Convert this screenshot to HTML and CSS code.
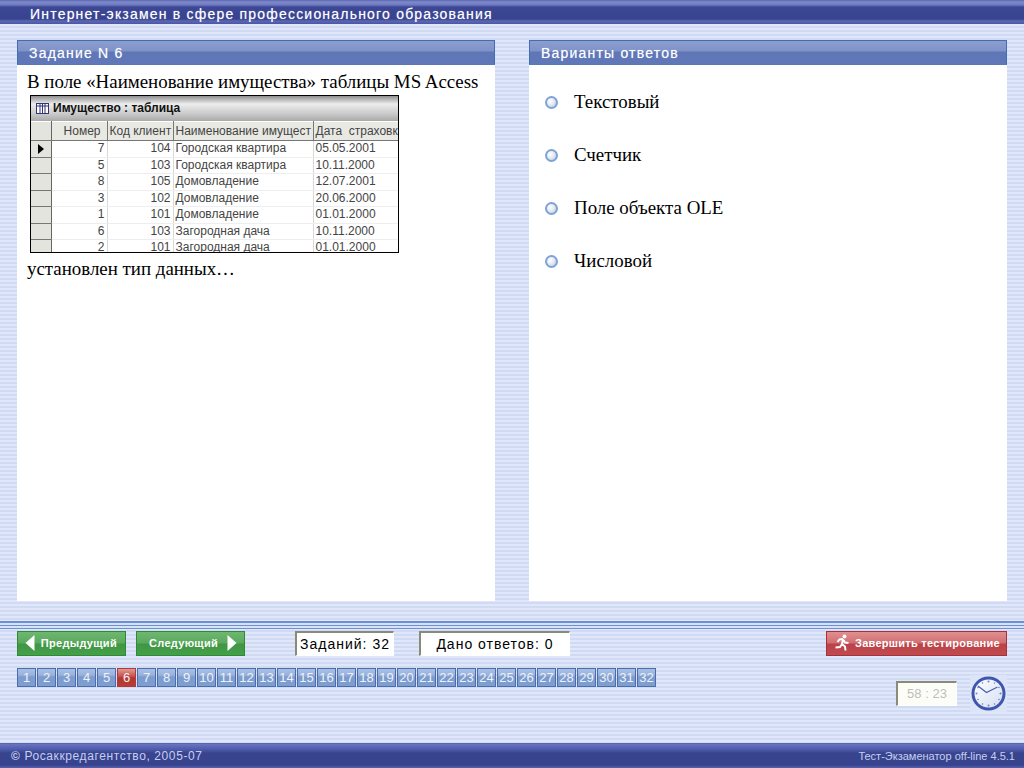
FILE: index.html
```html
<!DOCTYPE html>
<html lang="ru">

<head>
    <meta charset="UTF-8">
    <title>Интернет-экзамен</title>
    <link rel="stylesheet" href="styles.css">
</head>

<body>
    <div class="top-bar">Интернет-экзамен в сфере профессионального образования</div>

    <div class="main">
        <div class="panel">
            <div class="panel-head">Задание N 6</div>
            <div class="question">
                <div>В поле «Наименование имущества» таблицы MS Access</div>
                <div class="shot">
                    <div class="shot-title">
                        <svg class="shot-icon" width="13" height="11" viewBox="0 0 13 11">
                            <rect x="0.5" y="0.5" width="12" height="10" fill="#fff" stroke="#33337a"/>
                            <path d="M0 3h13M4 1v9M6.500 1v9M9 1v9" stroke="#33337a" fill="none"/>
                        </svg>
                        Имущество : таблица
                    </div>
                    <table class="shot-table">
                        <tr>
                            <th class="mark"></th>
                            <th class="c-num">Номер</th>
                            <th class="c-code">Код клиент</th>
                            <th class="c-name">Наименование имущест</th>
                            <th class="c-date">Дата&nbsp; страховк</th>
                        </tr>
                        <tr><td class="mark"><span class="arrow"></span></td><td class="num">7</td><td class="num">104</td><td>Городская квартира</td><td>05.05.2001</td></tr>
                        <tr><td class="mark"></td><td class="num">5</td><td class="num">103</td><td>Городская квартира</td><td>10.11.2000</td></tr>
                        <tr><td class="mark"></td><td class="num">8</td><td class="num">105</td><td>Домовладение</td><td>12.07.2001</td></tr>
                        <tr><td class="mark"></td><td class="num">3</td><td class="num">102</td><td>Домовладение</td><td>20.06.2000</td></tr>
                        <tr><td class="mark"></td><td class="num">1</td><td class="num">101</td><td>Домовладение</td><td>01.01.2000</td></tr>
                        <tr><td class="mark"></td><td class="num">6</td><td class="num">103</td><td>Загородная дача</td><td>10.11.2000</td></tr>
                        <tr><td class="mark"></td><td class="num">2</td><td class="num">101</td><td>Загородная дача</td><td>01.01.2000</td></tr>
                    </table>
                </div>
                <div>установлен тип данных…</div>
            </div>
        </div>

        <div class="panel">
            <div class="panel-head">Варианты ответов</div>
            <div class="answers">
                <div class="answer"><span class="radio"></span>Текстовый</div>
                <div class="answer"><span class="radio"></span>Счетчик</div>
                <div class="answer"><span class="radio"></span>Поле объекта OLE</div>
                <div class="answer"><span class="radio"></span>Числовой</div>
            </div>
        </div>
    </div>

    <div class="rule"></div>

    <div class="controls">
        <div class="btn btn-green">
            <svg width="10" height="18" viewBox="0 0 10 18"><path d="M9.500 1v16L0.500 9z" fill="#fff"/></svg>
            <span>Предыдущий</span>
        </div>
        <div class="btn btn-green btn-next">
            <span>Следующий</span>
            <svg width="10" height="18" viewBox="0 0 10 18"><path d="M0.500 1v16l9-8z" fill="#fff"/></svg>
        </div>
        <div class="counter counter-tasks">Заданий: 32</div>
        <div class="counter counter-given">Дано ответов: 0</div>
        <div class="btn btn-red">
            <svg width="16" height="18" viewBox="0 0 16 18">
                <circle cx="10.500" cy="2.500" r="2" fill="#fff"/>
                <path d="M9 5L5.500 5.500L3.500 8M9 5L8 10L11 12.500L11.500 16.500M8 10L6 13L1.500 13.500M9.500 6L11 8.500L14.500 9" stroke="#fff" stroke-width="2" fill="none"/>
            </svg>
            <span>Завершить тестирование</span>
        </div>
    </div>

    <div class="lower">
        <div class="pages" id="pages"></div>
        <div class="time">
            <div class="timer">58 : 23</div>
            <svg class="clock" width="37" height="37" viewBox="0 0 37 37">
                <defs>
                    <linearGradient id="face" x1="0" y1="0" x2="1" y2="1">
                        <stop offset="0" stop-color="#ffffff"/>
                        <stop offset="1" stop-color="#d3ddf3"/>
                    </linearGradient>
                </defs>
                <rect width="37" height="37" fill="#dce5f8"/>
                <circle cx="18.500" cy="18.500" r="15.500" fill="url(#face)" stroke="#3f56ac" stroke-width="3"/>
                <g fill="#6f86c6">
                    <circle cx="18.500" cy="6.500" r="1"/><circle cx="18.500" cy="30.500" r="1"/>
                    <circle cx="6.500" cy="18.500" r="1"/><circle cx="30.500" cy="18.500" r="1"/>
                    <circle cx="12.500" cy="8" r="0.800"/><circle cx="24.500" cy="8" r="0.800"/>
                    <circle cx="12.500" cy="29" r="0.800"/><circle cx="24.500" cy="29" r="0.800"/>
                    <circle cx="8" cy="12.500" r="0.800"/><circle cx="29" cy="12.500" r="0.800"/>
                    <circle cx="8" cy="24.500" r="0.800"/><circle cx="29" cy="24.500" r="0.800"/>
                </g>
                <path d="M8 11L16.500 17.500L27.500 12" stroke="#4a5fae" stroke-width="1.200" fill="none"/>
            </svg>
        </div>
    </div>

    <div class="bottom-bar">
        <span><span class="copy">©</span> Росаккредагентство, 2005-07</span>
        <span class="version">Тест-Экзаменатор off-line 4.5.1</span>
    </div>

    <script>
        let pages = document.getElementById("pages");
        for (let i = 1; i <= 32; i++) {
            let cell = document.createElement("div");
            cell.className = i == 6 ? "page page-current" : "page";
            cell.innerText = i;
            pages.appendChild(cell);
        }
    </script>
</body>

</html>
```

FILE: styles.css
```css
* {
    box-sizing: border-box;
}

html, body {
    margin: 0;
    padding: 0;
}

body {
    width: 1024px;
    height: 768px;
    overflow: hidden;
    display: flex;
    flex-direction: column;
    font-family: "Liberation Sans", Arial, sans-serif;
    background: repeating-linear-gradient(180deg, #e0e7fa 0, #e0e7fa 2px, #d0daf2 2px, #d0daf2 4px);
}

.top-bar {
    height: 24px;
    padding: 4px 0 0 30px;
    color: #fff;
    font-size: 14px;
    line-height: 20px;
    letter-spacing: 1.200px;
    text-shadow: 0 0 1px rgba(255, 255, 255, 0.5);
    background: linear-gradient(180deg, #5a66b4 0, #7f8ac9 2px, #6e79c0 5px, #3c4796 7px, #38438f 19px, #5c68b4 21px, #4a55a4 24px);
    white-space: nowrap;
}

.main {
    display: flex;
    gap: 34px;
    padding: 16px 17px 0;
}

.panel {
    width: 478px;
    height: 561px;
    background: #fff;
}

.panel-head {
    height: 25px;
    padding-left: 11px;
    color: #fff;
    font-size: 14px;
    line-height: 25px;
    letter-spacing: 1.200px;
    text-shadow: 0 0 1px rgba(255, 255, 255, 0.5);
    border: 1px solid #3f6fae;
    border-bottom-color: #5a78b8;
    background: linear-gradient(180deg, #8c9ecf 0, #7f93c8 10px, #5f76b7 11px, #6078b8 24px);
}

.question {
    padding: 6px 10px;
    color: #000;
    font-family: "Liberation Serif", "Times New Roman", serif;
    font-size: 18.900px;
    line-height: 21px;
}

.shot {
    width: 369px;
    height: 158px;
    margin: 3px 0 5px 3px;
    border: 1px solid #000;
    overflow: hidden;
    background: #fff;
    font-family: "Liberation Sans", Arial, sans-serif;
}

.shot-title {
    display: flex;
    align-items: center;
    gap: 4px;
    height: 25px;
    padding-left: 5px;
    font-size: 12px;
    font-weight: bold;
    color: #111;
    background: linear-gradient(180deg, #8f8f8f 0, #ededed 8px, #c9c9c9 18px, #a9a9a9 25px);
}

.shot-table {
    border-collapse: collapse;
    table-layout: fixed;
    width: 367px;
    font-size: 12px;
    line-height: 15px;
    color: #444;
}

.shot-table th {
    height: 19px;
    padding: 0 2px;
    font-weight: normal;
    text-align: left;
    white-space: nowrap;
    overflow: hidden;
    background: #e9e9e4;
    border-right: 1px solid #777;
    border-top: 1px solid #fff;
    border-bottom: 1px solid #777;
}

.shot-table td {
    height: 16.500px;
    padding: 0 2px;
    white-space: nowrap;
    overflow: hidden;
    border-right: 1px solid #d8d8d8;
    border-bottom: 1px solid #eeeeee;
}

.shot-table .c-num {
    width: 56px;
    text-align: right;
    padding-right: 6px;
}

.shot-table .c-code {
    width: 66px;
}

.shot-table .c-name {
    width: 140px;
}

.shot-table .c-date {
    width: 85px;
    border-right: none;
}

.shot-table th.mark,
.shot-table td.mark {
    width: 20px;
    background: #e4e4de;
    border-right: 1px solid #666;
    border-bottom: 1px solid #777;
}

.shot-table .num {
    text-align: right;
}

.arrow {
    display: block;
    width: 0;
    height: 0;
    margin-left: 5px;
    border-left: 6px solid #000;
    border-top: 5px solid transparent;
    border-bottom: 5px solid transparent;
}

.answers {
    padding: 10px 0 0 16px;
}

.answer {
    display: flex;
    align-items: center;
    height: 53px;
    color: #000;
    font-family: "Liberation Serif", "Times New Roman", serif;
    font-size: 18.900px;
}

.radio {
    width: 13px;
    height: 13px;
    margin-top: 2px;
    margin-right: 16px;
    border-radius: 50%;
    border: 2px solid #7fa3d6;
    background: radial-gradient(circle at 35% 35%, #ffffff 0, #e6ebf3 45%, #bcc7dc 100%);
}

.rule {
    height: 8px;
    margin-top: 20px;
    border-top: 1px solid #6d8fd3;
    background: repeating-linear-gradient(180deg, #6d8fd3 0, #6d8fd3 1px, #d8e2f7 1px, #d8e2f7 3px);
}

.controls {
    display: flex;
    align-items: center;
    margin-top: 2px;
    padding: 0 17px;
}

.btn {
    display: flex;
    align-items: center;
    height: 25px;
    padding-bottom: 1px;
    color: #fff;
    font-size: 11px;
    font-weight: bold;
    letter-spacing: 0.300px;
    white-space: nowrap;
}

.btn-green {
    justify-content: space-between;
    width: 109px;
    padding-left: 7px;
    padding-right: 8px;
    margin-right: 10px;
    border: 1px solid #2f8a34;
    background: linear-gradient(180deg, #6fb770 0, #5aa95d 11px, #3f9644 12px, #46a04a 24px);
}

.btn-next {
    padding-left: 12px;
    padding-right: 7px;
}

.btn-red {
    gap: 5px;
    width: 181px;
    margin-left: auto;
    padding-left: 7px;
    letter-spacing: 0.270px;
    border: 1px solid #a83038;
    background: linear-gradient(180deg, #e08f8f 0, #d16f72 11px, #bb4248 12px, #c04c50 24px);
}

.counter {
    height: 25px;
    color: #000;
    font-size: 14px;
    line-height: 22px;
    letter-spacing: 1px;
    text-align: center;
    white-space: nowrap;
    background: #fff;
    border: 1px solid #fff;
    border-top: 2px solid #8a8a78;
    border-left: 2px solid #8a8a78;
}

.counter-tasks {
    width: 99px;
    margin-left: 40px;
}

.counter-given {
    width: 151px;
    margin-left: 25px;
}

.lower {
    display: flex;
    justify-content: space-between;
    align-items: flex-start;
    margin-top: 12px;
    padding: 0 17px;
}

.pages {
    display: flex;
    gap: 1px;
}

.page {
    width: 19px;
    height: 19px;
    color: #eef2fb;
    font-size: 13px;
    line-height: 17px;
    text-align: center;
    border: 1px solid #4a6db0;
    background: linear-gradient(180deg, #a9c0e2 0, #9ab3dc 6px, #7c9ccd 8px, #7f9fd0 18px);
}

.page-current {
    border-color: #b03a3a;
    background: linear-gradient(180deg, #e09a94 0, #c7564f 7px, #b5362f 9px, #b93c36 18px);
}

.time {
    display: flex;
    align-items: center;
    gap: 13px;
    margin-top: 7px;
}

.timer {
    width: 61px;
    height: 25px;
    color: #bdbdbd;
    font-size: 13px;
    line-height: 22px;
    text-align: center;
    background: #fdfdf8;
    border: 1px solid #fff;
    border-top: 2px solid #8a8a78;
    border-left: 2px solid #8a8a78;
}

.bottom-bar {
    display: flex;
    justify-content: space-between;
    align-items: center;
    height: 25px;
    margin-top: auto;
    padding: 0 9px 0 11px;
    color: #c6cff0;
    font-size: 12px;
    letter-spacing: 0.600px;
    border-top: 1px solid #5a66b4;
    background: linear-gradient(180deg, #6a75c0 0, #4b57a9 6px, #39448f 9px, #38438e 21px, #5560b0 24px);
}

.copy {
    font-weight: bold;
}

.version {
    letter-spacing: 0;
    font-size: 11px;
}
```
